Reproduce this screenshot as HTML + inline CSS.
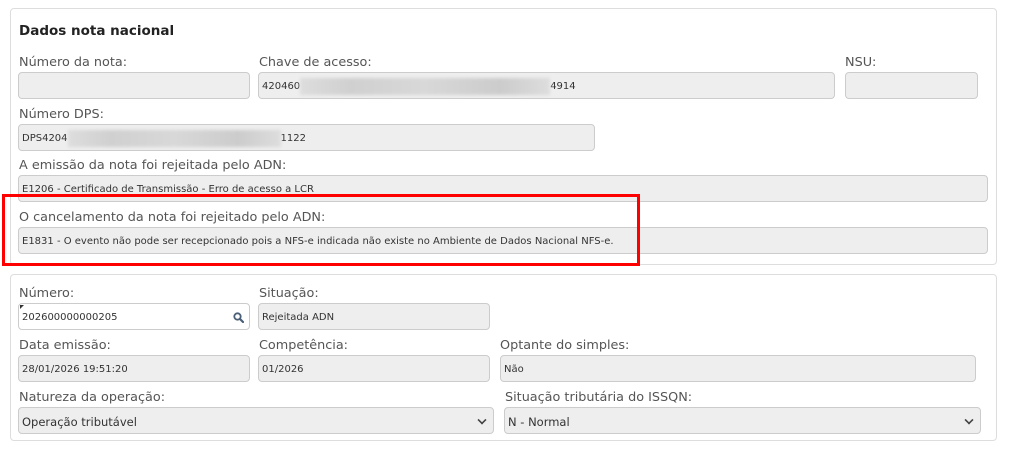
<!DOCTYPE html>
<html><head><meta charset="utf-8"><style>
body{margin:0;width:1010px;height:450px;background:#fff;position:relative;overflow:hidden;font-family:"DejaVu Sans","Liberation Sans",sans-serif;}
.p{position:absolute;border:1px solid #ddd;border-radius:4px;background:#fff;}
.l{position:absolute;font-size:12.8px;color:#555;white-space:nowrap;line-height:16px;}
.i{position:absolute;height:27px;border:1px solid #ccc;border-radius:4px;background:#eee;box-sizing:border-box;font-size:10px;color:#333;line-height:27px;padding-left:3px;white-space:nowrap;}
.s{font-size:11.5px;padding-left:3px;}
.b{display:inline-block;vertical-align:middle;height:17px;background:linear-gradient(90deg,#ddd,#d0d0d0 20%,#d8d8d8 50%,#ccc 80%,#ddd);filter:blur(1.5px);}
.ch{position:absolute;right:7px;width:6px;height:6px;border-right:2px solid #444;border-bottom:2px solid #444;transform:rotate(45deg) scale(.8);}
</style></head><body>
<div class="p" style="left:10px;top:8px;width:985px;height:255px"></div>
<div style="position:absolute;left:19px;top:23px;font-size:13.5px;font-weight:bold;color:#222">Dados nota nacional</div>
<div class="l" style="left:19px;top:55px">Número da nota:</div>
<div class="l" style="left:259px;top:55px">Chave de acesso:</div>
<div class="l" style="left:845px;top:55px">NSU:</div>
<div class="i" style="left:18px;top:72px;width:232px"></div>
<div class="i" style="left:258px;top:72px;width:577px">420460<span class="b" style="width:250px"></span>4914</div>
<div class="i" style="left:845px;top:72px;width:133px"></div>
<div class="l" style="left:19px;top:107px">Número DPS:</div>
<div class="i" style="left:18px;top:124px;width:577px">DPS4204<span class="b" style="width:213px"></span>1122</div>
<div class="l" style="left:19px;top:158px">A emissão da nota foi rejeitada pelo ADN:</div>
<div class="i" style="left:18px;top:175px;width:970px">E1206 - Certificado de Transmissão - Erro de acesso a LCR</div>
<div class="l" style="left:19px;top:210px">O cancelamento da nota foi rejeitado pelo ADN:</div>
<div class="i" style="left:18px;top:227px;width:970px">E1831 - O evento não pode ser recepcionado pois a NFS-e indicada não existe no Ambiente de Dados Nacional NFS-e.</div>
<div style="position:absolute;left:2px;top:194px;width:632px;height:66px;border:3px solid #f00"></div>

<div class="p" style="left:10px;top:274px;width:985px;height:165px"></div>
<div class="l" style="left:19px;top:286px">Número:</div>
<div class="l" style="left:259px;top:286px">Situação:</div>
<div class="i" style="left:18px;top:303px;width:232px;background:#fff">202600000000205
<svg style="position:absolute;right:5px;top:8px" width="11" height="11" viewBox="0 0 11 11"><circle cx="4.5" cy="4.5" r="3.2" fill="none" stroke="#4a5f78" stroke-width="1.8"/><path d="M7 7l3 3" stroke="#4a5f78" stroke-width="2.2" stroke-linecap="round"/></svg>
<div style="position:absolute;left:1px;top:1px;width:0;height:0;border-top:4px solid #333;border-right:4px solid transparent"></div></div>
<div class="i" style="left:258px;top:303px;width:232px">Rejeitada ADN</div>
<div class="l" style="left:19px;top:338px">Data emissão:</div>
<div class="l" style="left:259px;top:338px">Competência:</div>
<div class="l" style="left:500px;top:338px">Optante do simples:</div>
<div class="i" style="left:18px;top:355px;width:232px">28/01/2026 19:51:20</div>
<div class="i" style="left:258px;top:355px;width:232px">01/2026</div>
<div class="i" style="left:500px;top:355px;width:476px">Não</div>
<div class="l" style="left:19px;top:390px">Natureza da operação:</div>
<div class="l" style="left:505px;top:390px">Situação tributária do ISSQN:</div>
<div class="i s" style="left:18px;top:407px;width:476px;height:27px;line-height:28px">Operação tributável<span class="ch" style="top:8px"></span></div>
<div class="i s" style="left:504px;top:407px;width:477px;height:27px;line-height:28px">N - Normal<span class="ch" style="top:8px"></span></div>
</body></html>
